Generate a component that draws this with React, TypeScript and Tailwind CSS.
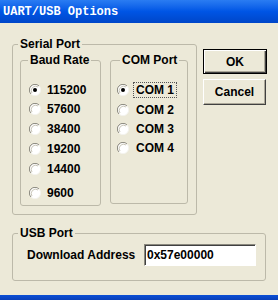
import React from 'react'

const bauds = [
  { label: '115200', gap: 'mt-[16px]', on: true },
  { label: '57600', gap: 'mt-[5px]', on: false },
  { label: '38400', gap: 'mt-[6px]', on: false },
  { label: '19200', gap: 'mt-[6px]', on: false },
  { label: '14400', gap: 'mt-[6px]', on: false },
  { label: '9600', gap: 'mt-[10px]', on: false },
]

const ports = [
  { label: 'COM 1', gap: 'mt-[16px]', on: true },
  { label: 'COM 2', gap: 'mt-[6px]', on: false },
  { label: 'COM 3', gap: 'mt-[5px]', on: false },
  { label: 'COM 4', gap: 'mt-[5px]', on: false },
]

function Radio({ on }: { on: boolean }) {
  return (
    <svg width="12" height="12" viewBox="0 0 12 12" className="shrink-0">
      <circle cx="6" cy="6" r="5.5" fill="#fff" />
      <path d="M10 2 A5.5 5.5 0 0 0 2 10" fill="none" stroke="#8a887e" strokeWidth="1" />
      <path d="M9 3 A4.3 4.3 0 0 0 3 9" fill="none" stroke="#c9c6b8" strokeWidth="1" />
      <path d="M2 10 A5.5 5.5 0 0 0 10 2" fill="none" stroke="#f4f3ee" strokeWidth="1" />
      {on && <circle cx="6" cy="6" r="2" fill="#000" />}
    </svg>
  )
}

export default function App() {
  return (
    <div
      className="flex h-[300px] w-[278px] flex-col overflow-hidden bg-[#ece9d8] text-[12px] font-bold text-black"
      style={{ fontFamily: '"Liberation Sans", Arial, sans-serif' }}
    >
      <div className="flex h-[23px] shrink-0 items-center bg-gradient-to-b from-[#2a7cf2] via-[#0055e5] to-[#0046c8] pl-[3px]">
        <span className="text-[12px] font-bold text-white" style={{ fontFamily: '"Liberation Mono", monospace' }}>
          UART/USB Options
        </span>
      </div>

      <div className="flex-1 pl-[12px]">
        <div className="flex items-start">
          <fieldset className="mt-[14px] flex h-[178px] w-[185px] items-start rounded-[3px] border border-[#bcb9a9] p-0">
            <legend className="ml-[5px] px-[2px] leading-[14px]">Serial Port</legend>

            <fieldset className="ml-[7px] mt-[2px] h-[153px] w-[81px] rounded-[3px] border border-[#bcb9a9] p-0">
              <legend className="ml-[7px] px-[2px] leading-[14px]">Baud Rate</legend>
              <div className="pl-[8px]">
                {bauds.map((b) => (
                  <div key={b.label} className={`flex h-[14px] items-center gap-[6px] ${b.gap}`}>
                    <Radio on={b.on} />
                    <span className="leading-[14px]">{b.label}</span>
                  </div>
                ))}
              </div>
            </fieldset>

            <fieldset className="ml-[9px] mt-[2px] h-[151px] w-[78px] rounded-[3px] border border-[#bcb9a9] p-0">
              <legend className="ml-[9px] px-[2px] leading-[14px]">COM Port</legend>
              <div className="pl-[6px]">
                {ports.map((p) => (
                  <div key={p.label} className={`flex h-[14px] items-center gap-[4px] ${p.gap}`}>
                    <Radio on={p.on} />
                    <span
                      className={`border px-[2px] leading-[14px] ${
                        p.on ? 'border-dotted border-[#555]' : 'border-transparent'
                      }`}
                    >
                      {p.label}
                    </span>
                  </div>
                ))}
              </div>
            </fieldset>
          </fieldset>

          <div className="ml-[6px] mt-[26px] flex flex-col gap-[5px]">
            <button className="h-[25px] w-[64px] border border-black bg-[#ece9d8] shadow-[inset_1px_1px_0_#fff,inset_-1px_-1px_0_#404040,inset_-2px_-2px_0_#aca899] text-[12px] font-bold">
              OK
            </button>
            <button className="h-[26px] w-[63px] border border-[#ece9d8] border-t-white border-l-white border-r-[#404040] border-b-[#404040] bg-[#ece9d8] shadow-[inset_-1px_-1px_0_#aca899] text-[12px] font-bold">
              Cancel
            </button>
          </div>
        </div>

        <fieldset className="mt-[11px] h-[55px] w-[254px] rounded-[3px] border border-[#bcb9a9] p-0">
          <legend className="ml-[5px] px-[2px] leading-[14px]">USB Port</legend>
          <div className="mt-[4px] flex items-center">
            <span className="ml-[14px] w-[117px] leading-[14px]">Download Address</span>
            <div className="flex h-[22px] w-[112px] items-center border border-[#ece9d8] border-t-[#8a887e] border-l-[#8a887e] border-b-white border-r-white bg-white pl-[2px] shadow-[inset_1px_1px_0_#404040]">
              0x57e00000
            </div>
          </div>
        </fieldset>
      </div>

      <div className="h-[5px] shrink-0 bg-gradient-to-b from-[#0b4fd6] to-[#0a3fb8]" />
    </div>
  )
}
